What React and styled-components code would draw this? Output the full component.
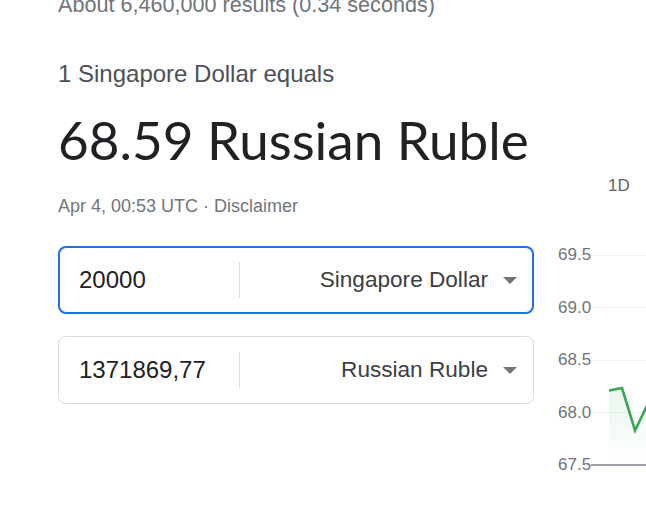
import styled, { createGlobalStyle } from "styled-components"

const GlobalStyle = createGlobalStyle`
  html, body {
    margin: 0;
    background: #fff;
    overflow: hidden;
  }
  body {
    font-family: "Liberation Sans", Arial, sans-serif;
  }
`

const rates = ["69.5", "69.0", "68.5", "68.0", "67.5"]

function Converter({ amount, currency, focused }) {
    const border = focused ? 2 : 1;
    return <Box $border={border} $focused={focused}>
        <Amount $border={border}>{amount}</Amount>
        <Divider />
        <CurrencySelect $border={border}>
            <CurrencyName>{currency}</CurrencyName>
            <Arrow />
        </CurrencySelect>
    </Box>
}

function Chart() {
    return <ChartColumn>
        <Tabs>
            <Tab>1D</Tab>
        </Tabs>
        <Plot>
            {rates.map((rate, i) => (
                <Row key={rate}>
                    <Label>{rate}</Label>
                    <GridLine $base={i === rates.length - 1} />
                </Row>
            ))}
            <LineSvg width="200" height="262" viewBox="0 0 200 262">
                <defs>
                    <linearGradient id="fade" x1="0" y1="0" x2="0" y2="1">
                        <stop offset="0" stopColor="#34a853" stopOpacity="0.12" />
                        <stop offset="1" stopColor="#34a853" stopOpacity="0" />
                    </linearGradient>
                </defs>
                <path d="M51 161.5 L64 159 L77 201.5 L90 174.5 L120 150 L120 235 L51 235 Z" fill="url(#fade)" />
                <path d="M51 161.5 L64 159 L77 201.5 L90 174.5 L120 150" fill="none" stroke="#34a853" strokeWidth="2.6" strokeLinejoin="miter" />
            </LineSvg>
        </Plot>
    </ChartColumn>
}

export default function App() {
    return <Page>
        <GlobalStyle />
        <ResultStats>About 6,460,000 results (0.34 seconds)</ResultStats>
        <Layout>
            <Main>
                <Equals>1 Singapore Dollar equals</Equals>
                <Rate>68.59 Russian Ruble</Rate>
                <Meta>Apr 4, 00:53 UTC · Disclaimer</Meta>
                <Converters>
                    <Converter amount="20000" currency="Singapore Dollar" focused />
                    <Converter amount="1371869,77" currency="Russian Ruble" />
                </Converters>
            </Main>
            <Chart />
        </Layout>
    </Page>
}

const Page = styled.div`
margin-top: -7px;
padding-left: 58px;
`

const ResultStats = styled.div`
font-size: 21.6px;
line-height: 24px;
color: #70757a;
white-space: nowrap;
`

const Layout = styled.div`
display: flex;
align-items: flex-start;
gap: 24px;
margin-top: 43px;
`

const Main = styled.div`
width: 476px;
flex-shrink: 0;
`

const Equals = styled.div`
font-size: 24px;
line-height: 28px;
color: #4d5156;
`

const Rate = styled.div`
font-family: Lato, Roboto, "Liberation Sans", sans-serif;
font-size: 53px;
line-height: 64px;
color: #202124;
white-space: nowrap;
margin-top: 20px;
`

const Meta = styled.div`
font-size: 18px;
line-height: 22px;
color: #70757a;
margin-top: 23px;
`

const Converters = styled.div`
display: flex;
flex-direction: column;
gap: 22px;
margin-top: 29px;
`

const Box = styled.div`
box-sizing: border-box;
height: 68px;
display: flex;
align-items: center;
border: ${p => p.$border}px solid ${p => p.$focused ? "#1a73e8" : "#dadce0"};
border-radius: 8px;
`

const Amount = styled.div`
box-sizing: border-box;
width: ${p => 181 - p.$border}px;
padding-left: ${p => 21 - p.$border}px;
font-size: 24px;
line-height: 28px;
color: #202124;
`

const Divider = styled.div`
width: 1px;
height: 36px;
background: #dadce0;
`

const CurrencySelect = styled.div`
flex: 1;
display: flex;
align-items: center;
justify-content: flex-end;
gap: 15px;
padding-right: ${p => 17 - p.$border}px;
`

const CurrencyName = styled.span`
font-size: 22.6px;
line-height: 24px;
color: #3c4043;
`

const Arrow = styled.span`
width: 0;
height: 0;
border-left: 7.5px solid transparent;
border-right: 7.5px solid transparent;
border-top: 7.5px solid #757575;
`

const ChartColumn = styled.div`
width: 200px;
flex-shrink: 0;
margin-top: 116px;
`

const Tabs = styled.div`
display: flex;
padding-left: 50px;
`

const Tab = styled.span`
font-size: 17px;
line-height: 20px;
color: #5f6368;
`

const Plot = styled.div`
position: relative;
margin-top: 33px;
`

const Row = styled.div`
display: flex;
align-items: center;
height: 52.5px;
`

const Label = styled.span`
width: 33px;
font-size: 17px;
color: #70757a;
`

const GridLine = styled.div`
flex: 1;
height: ${p => p.$base ? 2 : 1}px;
background: ${p => p.$base ? "#9aa0a6" : "#f1f3f4"};
`

const LineSvg = styled.svg`
position: absolute;
left: 0;
top: 0;
`
